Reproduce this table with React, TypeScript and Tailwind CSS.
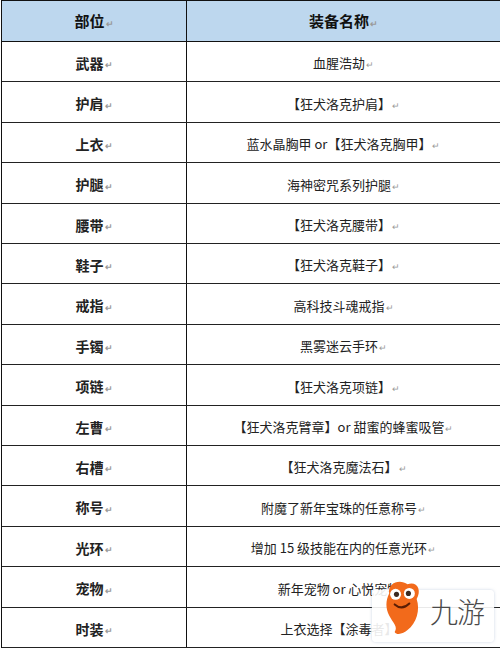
import React from "react";

const rows: { part: string; name: string; h: string }[] = [
  { part: "武器", name: "血腥浩劫", h: "h-[40px]" },
  { part: "护肩", name: "【狂犬洛克护肩】", h: "h-[41px]" },
  { part: "上衣", name: "蓝水晶胸甲 or【狂犬洛克胸甲】", h: "h-[40px]" },
  { part: "护腿", name: "海神密咒系列护腿", h: "h-[41px]" },
  { part: "腰带", name: "【狂犬洛克腰带】", h: "h-[40px]" },
  { part: "鞋子", name: "【狂犬洛克鞋子】", h: "h-[40px]" },
  { part: "戒指", name: "高科技斗魂戒指", h: "h-[41px]" },
  { part: "手镯", name: "黑雾迷云手环", h: "h-[40px]" },
  { part: "项链", name: "【狂犬洛克项链】", h: "h-[41px]" },
  { part: "左曹", name: "【狂犬洛克臂章】or 甜蜜的蜂蜜吸管", h: "h-[40px]" },
  { part: "右槽", name: "【狂犬洛克魔法石】", h: "h-[40px]" },
  { part: "称号", name: "附魔了新年宝珠的任意称号", h: "h-[41px]" },
  { part: "光环", name: "增加 15 级技能在内的任意光环", h: "h-[40px]" },
  { part: "宠物", name: "新年宠物 or 心悦宠物", h: "h-[41px]" },
  { part: "时装", name: "上衣选择【涂毒者】", h: "h-[40px]" },
];

const Mark = () => (
  <span className="text-[9px] text-[#9a9a9a] ml-[1px] relative top-[2px]">↵</span>
);

export default function App() {
  return (
    <div
      className="w-[500px] h-[649px] bg-white relative overflow-hidden"
      style={{ fontFamily: '"Noto Sans CJK SC", "Noto Sans", sans-serif' }}
    >
      <div className="ml-[1px] w-[499px] border-t border-l border-[#111]">
        <div className="flex h-[41px] bg-[#bdd7ee] border-b border-[#111]">
          <div className="w-[185px] border-r border-[#111] flex items-center justify-center pt-[1px] text-[15px] font-bold text-[#111]">
            部位<Mark />
          </div>
          <div className="flex-1 flex items-center justify-center pt-[1px] text-[15px] font-bold text-[#111]">
            装备名称<Mark />
          </div>
        </div>
        {rows.map((r) => (
          <div key={r.part} className={`flex ${r.h} border-b border-[#222]`}>
            <div className="w-[185px] border-r border-[#111] flex items-center justify-center pt-[3px] text-[14px] font-bold text-[#222]">
              {r.part}
              <Mark />
            </div>
            <div className="flex-1 flex items-center justify-center pt-[3px] text-[13px] text-[#222]">
              {r.name}
              <Mark />
            </div>
          </div>
        ))}
      </div>

      {/* 九游 watermark overlay */}
      <div className="absolute left-[372px] top-[578px] w-[122px] h-[66px] flex items-end">
        <div className="w-full h-[52px] mb-[2px] rounded-[4px] bg-white/90 shadow-[0_0_3px_rgba(150,170,200,0.5)] flex items-center">
          <svg
            className="ml-[8px] -mt-[14px] shrink-0"
            width="44"
            height="64"
            viewBox="0 0 48 66"
          >
            <path
              d="M10 16 C8 4 22 0 30 6 C40 2 46 12 40 22 C44 34 40 48 30 56 C26 60 18 62 16 58 C20 52 14 48 10 40 C6 32 6 24 10 16 Z"
              fill="#f26a1b"
            />
            <circle cx="17" cy="17" r="6" fill="#fff" />
            <circle cx="32" cy="16" r="6" fill="#fff" />
            <circle cx="18" cy="17" r="2.8" fill="#3b2a22" />
            <circle cx="31" cy="16" r="2.8" fill="#3b2a22" />
            <path d="M16 28 Q24 35 32 27" stroke="#5a1d05" strokeWidth="2.2" fill="none" strokeLinecap="round" />
          </svg>
          <span
            className="ml-[6px] -mt-[10px] text-[28px] leading-none text-[#4a4a4a] tracking-[-1px]"
            style={{ fontWeight: 300 }}
          >
            九游
          </span>
        </div>
      </div>
    </div>
  );
}
